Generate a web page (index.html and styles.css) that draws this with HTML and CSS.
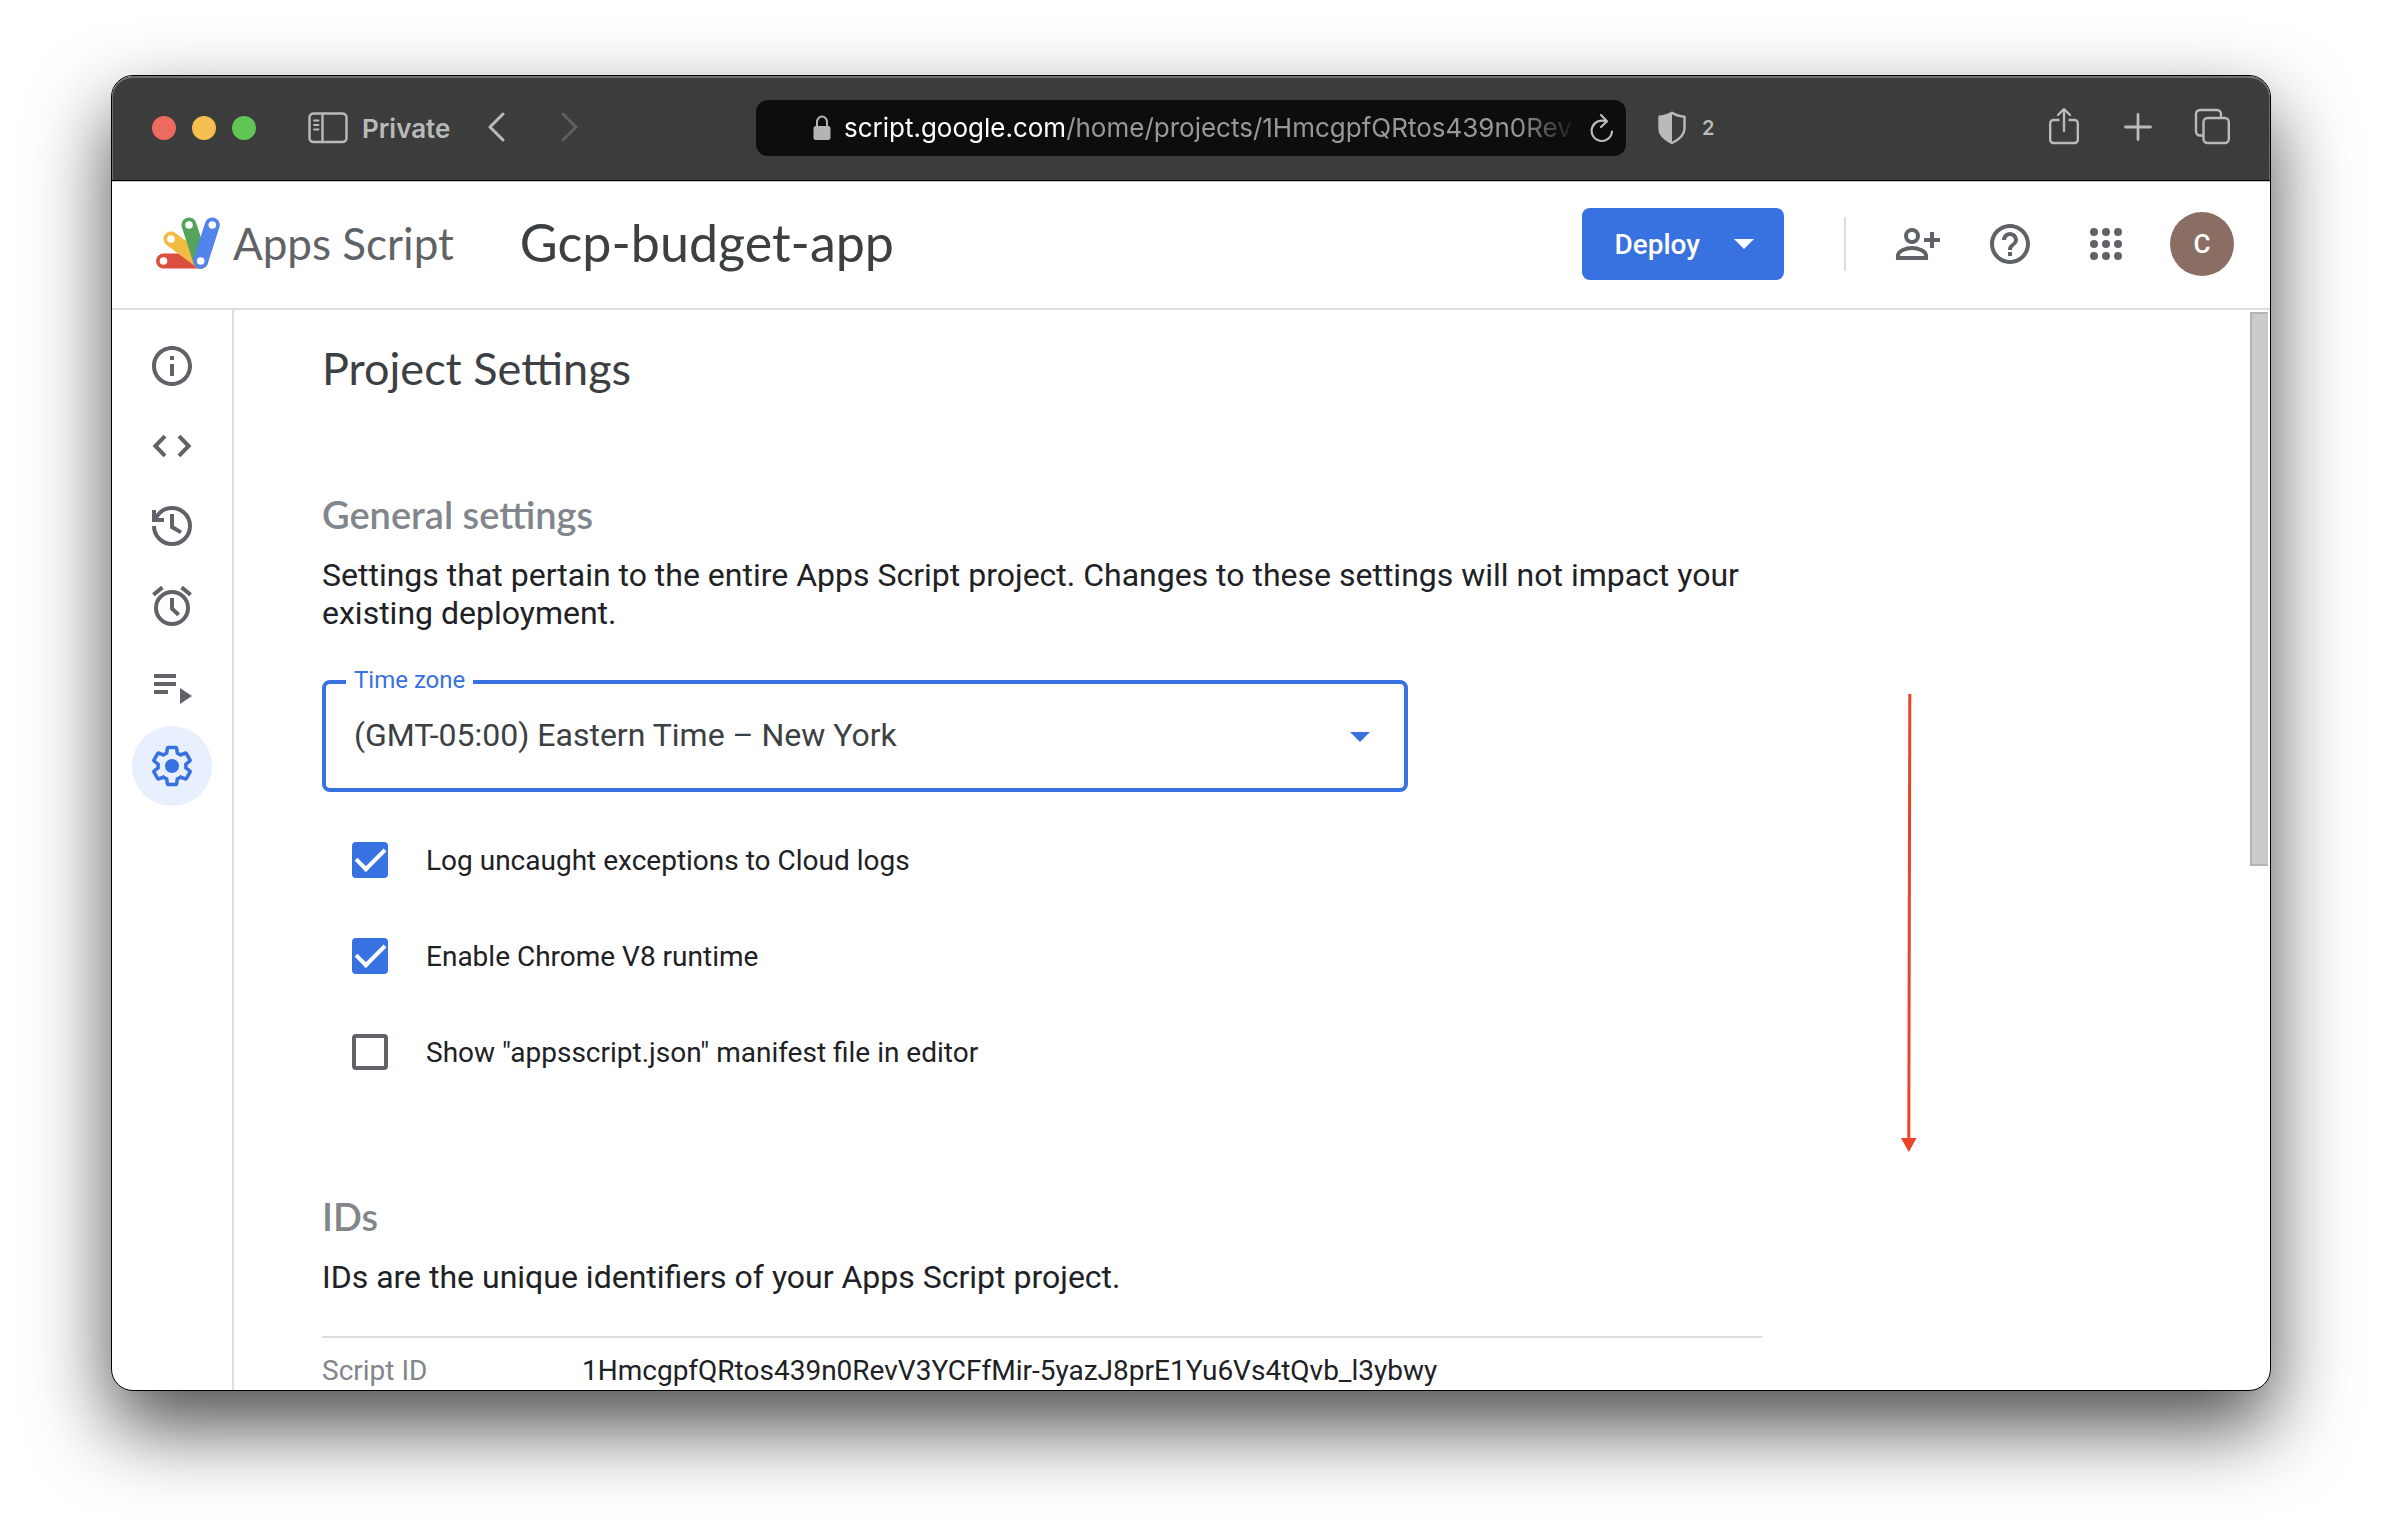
FILE: index.html
```html
<!DOCTYPE html>
<html lang="en">
<head>
<meta charset="utf-8">
<title>Gcp-budget-app - Project Settings - Apps Script</title>
<link rel="stylesheet" href="styles.css">
</head>
<body>
<div class="window">
  <div class="toolbar">
    <div class="toolbar-start">
      <div class="lights"><span class="light light-red"></span><span class="light light-yellow"></span><span class="light light-green"></span></div>
      <button class="tool private" type="button">
        <svg width="40" height="32" viewBox="0 0 40 32" fill="none" stroke="currentColor" stroke-width="2.4" stroke-linecap="round"><rect x="1.5" y="1.5" width="37" height="28.5" rx="4"/><path d="M14.500 2v28"/><path stroke-width="1.800" d="M6 8.500h4.500M6 13h4.500M6 17.500h4.500"/></svg>
        <span>Private</span>
      </button>
      <button class="tool back" type="button" aria-label="Back"><svg width="20" height="32" viewBox="0 0 20 32" fill="none" stroke="currentColor" stroke-width="3" stroke-linecap="round" stroke-linejoin="round"><path d="M17 2 4 15l13 13"/></svg></button>
      <button class="tool forward" type="button" aria-label="Forward" disabled><svg width="20" height="32" viewBox="0 0 20 32" fill="none" stroke="currentColor" stroke-width="3" stroke-linecap="round" stroke-linejoin="round"><path d="M3 2l13 13L3 28"/></svg></button>
    </div>
    <div class="address">
      <svg width="20" height="28" viewBox="0 0 20 28"><rect x="1.500" y="12" width="17" height="14" rx="2.500" fill="#b4b4b4"/><path d="M5 13V8a5 5.500 0 0 1 10 0v5" fill="none" stroke="#b4b4b4" stroke-width="2"/></svg>
      <button class="url" type="button"><span class="host">script.google.com</span>/home/projects/1HmcgpfQRtos439n0Rev</button>
      <button class="tool reload" type="button" aria-label="Reload"><svg width="24" height="30" viewBox="0 0 24 30" fill="none" stroke="currentColor" stroke-width="2.200" stroke-linecap="round" stroke-linejoin="round"><path d="M22 18.500A10.200 10.200 0 1 1 16.500 8.700"/><path d="M11 2l6 6.300-6 5.700"/></svg></button>
    </div>
    <div class="toolbar-end">
      <button class="tool shield" type="button" aria-label="Privacy report">
        <svg width="28" height="34" viewBox="0 0 28 34" fill="none" stroke="currentColor" stroke-width="2.400" stroke-linejoin="round"><path d="M14 1.800c3.500 2.500 7.500 3.400 12.500 4v12c0 6-5 10.500-12.500 14.200C6.500 28.300 1.500 23.800 1.500 17.800v-12c5-.6 9-1.500 12.500-4z"/><path fill="currentColor" stroke="none" d="M14 1.800v30.200C6.500 28.300 1.500 23.800 1.500 17.800v-12c5-.6 9-1.500 12.500-4z"/></svg>
        <span>2</span>
      </button>
      <div class="tools">
        <button class="tool" type="button" aria-label="Share"><svg width="36" height="40" viewBox="0 0 36 40" fill="none" stroke="currentColor" stroke-width="2.400" stroke-linecap="round" stroke-linejoin="round"><path d="M12.500 12H7.500a3.300 3.300 0 0 0-3.300 3.300v16.400A3.300 3.300 0 0 0 7.500 35h21a3.300 3.300 0 0 0 3.300-3.300V15.300a3.300 3.300 0 0 0-3.300-3.300h-5M18 23V1.300M12 7l6-6 6 6"/></svg></button>
        <button class="tool" type="button" aria-label="New tab"><svg width="36" height="40" viewBox="0 0 36 40" fill="none" stroke="currentColor" stroke-width="2.800" stroke-linecap="round"><path d="M18 6.500v25M5.500 19h25"/></svg></button>
        <button class="tool" type="button" aria-label="Tab overview"><svg width="36" height="40" viewBox="0 0 36 40" fill="none" stroke="currentColor" stroke-width="2.400" stroke-linejoin="round"><rect x="9.500" y="10" width="25.300" height="25" rx="4"/><path d="M9.500 27.500H6a4 4 0 0 1-4-4V6a4 4 0 0 1 4-4h17a4 4 0 0 1 4 4v4"/></svg></button>
      </div>
    </div>
  </div>

  <header class="header">
    <a class="brand" href="#">
      <svg width="64" height="52" viewBox="0 0 64 52" fill="none" stroke-width="15" stroke-linecap="round"><path stroke="#dc4f3f" d="M7.500 44h37"/><path stroke="#f2bc42" d="M15 22l29.700 22"/><path stroke="#56a45c" d="M33 8l11.700 36"/><path stroke="#5383ec" d="M56.300 8L44.700 44"/><g fill="#fff" stroke="none"><circle cx="7.500" cy="44" r="3.800"/><circle cx="15" cy="22" r="3.800"/><circle cx="33" cy="8" r="3.800"/><circle cx="56.300" cy="8" r="3.800"/><circle cx="44.700" cy="44" r="3.800"/></g></svg>
      <span>Apps Script</span>
    </a>
    <div class="project-name">Gcp-budget-app</div>
    <div class="actions">
      <button class="deploy" type="button"><span>Deploy</span><svg width="20" height="10" viewBox="0 0 20 10" fill="#fff"><path d="M0 0h20L10 10z"/></svg></button>
      <span class="divider"></span>
      <button class="icon" type="button" aria-label="Share project"><svg width="48" height="48" viewBox="0 0 24 24" fill="none" stroke="currentColor" stroke-width="2"><circle cx="9" cy="8" r="3"/><path d="M2 19v-1.200C2 15.400 6.200 14 9 14s7 1.400 7 3.800V19zM15 10h8M19 6v8"/></svg></button>
      <button class="icon" type="button" aria-label="Help"><svg width="48" height="48" viewBox="0 0 24 24" fill="currentColor"><path d="M11 18h2v-2h-2v2zm1-16C6.480 2 2 6.480 2 12s4.480 10 10 10 10-4.480 10-10S17.520 2 12 2zm0 18c-4.410 0-8-3.590-8-8s3.590-8 8-8 8 3.590 8 8-3.590 8-8 8zm0-14c-2.210 0-4 1.790-4 4h2c0-1.100.9-2 2-2s2 .9 2 2c0 2-3 1.750-3 5h2c0-2.250 3-2.500 3-5 0-2.210-1.790-4-4-4z"/></svg></button>
      <button class="icon" type="button" aria-label="Google apps"><svg width="48" height="48" viewBox="0 0 24 24" fill="currentColor"><circle cx="6" cy="6" r="2"/><circle cx="12" cy="6" r="2"/><circle cx="18" cy="6" r="2"/><circle cx="6" cy="12" r="2"/><circle cx="12" cy="12" r="2"/><circle cx="18" cy="12" r="2"/><circle cx="6" cy="18" r="2"/><circle cx="12" cy="18" r="2"/><circle cx="18" cy="18" r="2"/></svg></button>
      <button class="avatar" type="button">C</button>
    </div>
  </header>

  <div class="body">
    <nav class="rail">
      <a href="#" aria-label="Overview"><svg width="48" height="48" viewBox="0 0 24 24" fill="currentColor"><path d="M11 7h2v2h-2zm0 4h2v6h-2zm1-9C6.480 2 2 6.480 2 12s4.480 10 10 10 10-4.480 10-10S17.520 2 12 2zm0 18c-4.410 0-8-3.590-8-8s3.590-8 8-8 8 3.590 8 8-3.590 8-8 8z"/></svg></a>
      <a href="#" aria-label="Editor"><svg width="48" height="48" viewBox="0 0 24 24" fill="none" stroke="currentColor" stroke-width="2"><path d="M8.500 7.100L3.700 12l4.800 4.900M15.500 7.100l4.800 4.900-4.800 4.900"/></svg></a>
      <a href="#" aria-label="Project history"><svg width="48" height="48" viewBox="0 0 24 24" fill="none" stroke="currentColor" stroke-width="2"><path d="M3 12a9 9 0 1 0 9-9c-3.200 0-6 1.700-7.600 4.200L3.600 9M3 4v5h5M12 6v6.500l4.500 2.700"/></svg></a>
      <a href="#" aria-label="Triggers"><svg width="48" height="48" viewBox="0 0 24 24" fill="none" stroke="currentColor" stroke-width="2"><circle cx="12" cy="13" r="8"/><path d="M12 8v5.300l3.300 3.100M2.700 6.400L7.200 2.700M21.300 6.400l-4.500-3.700"/></svg></a>
      <a href="#" aria-label="Executions"><svg width="48" height="48" viewBox="0 0 24 24" fill="currentColor"><path d="M3 6h11v2H3zM3 10h11v2H3zM3 14h7v2H3zM16 13v8l6-4z"/></svg></a>
      <a href="#" class="active" aria-label="Project Settings" aria-current="page"><svg width="48" height="48" viewBox="0 0 24 24"><g transform="translate(12 12) scale(.93) translate(-12 -12)" fill="none" stroke="currentColor" stroke-width="1.900"><path d="M19.430 12.980c.04-.32.07-.64.07-.98 0-.34-.03-.66-.07-.98l2.110-1.650c.19-.15.24-.42.12-.64l-2-3.460c-.09-.16-.26-.25-.44-.25-.06 0-.12.01-.17.03l-2.490 1c-.52-.4-1.080-.73-1.690-.98l-.38-2.650C14.460 2.180 14.250 2 14 2h-4c-.25 0-.46.18-.49.42l-.38 2.650c-.61.25-1.170.59-1.690.98l-2.490-1c-.06-.02-.12-.03-.18-.03-.17 0-.34.09-.43.25l-2 3.460c-.13.22-.07.49.12.64l2.110 1.650c-.04.32-.07.65-.07.98 0 .33.03.66.07.98l-2.110 1.650c-.19.15-.24.42-.12.64l2 3.460c.09.16.26.25.44.25.06 0 .12-.01.17-.03l2.490-1c.52.4 1.080.73 1.690.98l.38 2.650c.03.24.24.42.49.42h4c.25 0 .46-.18.49-.42l.38-2.650c.61-.25 1.170-.59 1.690-.98l2.490 1c.06.02.12.03.18.03.17 0 .34-.09.43-.25l2-3.460c.12-.22.07-.49-.12-.64l-2.110-1.650z"/></g><circle cx="12" cy="12" r="3.500" fill="currentColor"/></svg></a>
    </nav>
    <main class="settings">
      <h1>Project Settings</h1>
      <section>
        <h2>General settings</h2>
        <p>Settings that pertain to the entire Apps Script project. Changes to these settings will not impact your existing deployment.</p>
        <div class="field">
          <label for="tz">Time zone</label>
          <select id="tz"><option>(GMT-05:00) Eastern Time – New York</option></select>
          <svg class="caret" width="20" height="10" viewBox="0 0 20 10"><path fill="currentColor" d="M0 0h20L10 10z"/></svg>
        </div>
        <div class="options">
          <label><input type="checkbox" checked><span>Log uncaught exceptions to Cloud logs</span></label>
          <label><input type="checkbox" checked><span>Enable Chrome V8 runtime</span></label>
          <label><input type="checkbox"><span>Show "appsscript.json" manifest file in editor</span></label>
        </div>
      </section>
      <section>
        <h2>IDs</h2>
        <p>IDs are the unique identifiers of your Apps Script project.</p>
        <table class="ids"><tbody><tr><th scope="row">Script ID</th><td>1HmcgpfQRtos439n0RevV3YCFfMir-5yazJ8prE1Yu6Vs4tQvb_l3ybwy</td></tr></tbody></table>
      </section>
    </main>
    <div class="scrollbar"><div class="thumb"></div></div>
    <svg class="arrow" width="16" height="458" viewBox="0 0 16 458"><path d="M8.800 0L7.800 446" stroke="#ea4326" stroke-width="3"/><path d="M0 444h15.500L7.800 458z" fill="#ea4326"/></svg>
  </div>
</div>
</body>
</html>
```
FILE: styles.css
```css
* { box-sizing: border-box; }

:root {
  --blue: #3871e0;
  --ink: #202124;
  --ink-soft: #3c4043;
  --icon: #5f6368;
  --muted: #80868b;
  --line: #dadce0;
  --chrome: #3b3c3b;
  --chrome-ink: #b9bbba;
}

body {
  margin: 0;
  height: 100vh;
  padding: 75px 111px 147px;
  display: flex;
  background: #fff;
  color: var(--ink);
  font-family: Roboto, sans-serif;
}

svg { display: block; flex: none; }

button {
  border: 0;
  padding: 0;
  background: none;
  color: inherit;
  font: inherit;
}

.window {
  flex: 1;
  min-width: 0;
  display: flex;
  flex-direction: column;
  overflow: hidden;
  border: 1px solid #000;
  border-radius: 22px;
  background: #fff;
  box-shadow: 0 36px 80px rgba(0, 0, 0, .7);
}

/* Browser toolbar */
.toolbar {
  flex: none;
  height: 105px;
  display: grid;
  grid-template-columns: 37fr 50fr 37fr;
  align-items: center;
  border-bottom: 1px solid #000;
  border-radius: 21px 21px 0 0;
  background: var(--chrome);
  box-shadow: inset 0 2px 0 #6f706f, inset 1px 0 0 #6f706f, inset -1px 0 0 #6f706f;
  color: var(--chrome-ink);
  font-family: Inter, sans-serif;
}

.toolbar-start,
.toolbar-end,
.lights,
.tool { display: flex; align-items: center; }

.toolbar-start { padding-left: 40px; }
.lights { gap: 16px; margin-right: 52px; }
.light { width: 24px; height: 24px; border-radius: 50%; }
.light-red { background: #ec6a5e; }
.light-yellow { background: #f4bf4f; }
.light-green { background: #61c554; }

.private {
  gap: 14px;
  margin-right: 36px;
  font-size: 26px;
  font-weight: 600;
}
.back { margin-right: 54px; }
.forward { color: #5f605f; }

.address {
  min-width: 0;
  height: 56px;
  display: flex;
  align-items: center;
  gap: 12px;
  padding: 0 12px 0 56px;
  border-radius: 12px;
  background: #0d0d0d;
  color: #98989a;
}
.url {
  flex: 1;
  min-width: 0;
  overflow: hidden;
  text-align: left;
  white-space: nowrap;
  font-size: 26px;
  line-height: 36px;
  -webkit-mask-image: linear-gradient(to right, #000 92%, transparent);
  mask-image: linear-gradient(to right, #000 92%, transparent);
}
.host { color: #fff; }
.reload { color: var(--chrome-ink); }

.toolbar-end { justify-content: space-between; padding: 0 40px 0 32px; }
.shield { gap: 16px; font-size: 20px; font-weight: 600; }
.tools { display: flex; gap: 38px; }

/* App header */
.header {
  flex: none;
  height: 129px;
  display: flex;
  align-items: center;
  padding: 0 36px 2px 44px;
  border-top: 1px solid #c8c8c8;
  border-bottom: 2px solid var(--line);
}
.brand {
  display: flex;
  align-items: center;
  gap: 13px;
  padding-bottom: 2px;
  color: var(--icon);
  font: 44px/56px Lato, sans-serif;
  text-decoration: none;
  white-space: nowrap;
}
.project-name {
  margin-left: 66px;
  padding-bottom: 4px;
  color: var(--ink-soft);
  font: 52px/64px Lato, sans-serif;
  white-space: nowrap;
}
.actions {
  margin-left: auto;
  display: flex;
  align-items: center;
  color: var(--icon);
}
.deploy {
  height: 72px;
  display: flex;
  align-items: center;
  gap: 34px;
  padding: 0 30px 0 32px;
  border-radius: 8px;
  background: var(--blue);
  color: #fff;
  font-size: 28px;
  font-weight: 500;
}
.divider { width: 2px; height: 54px; margin: 0 48px 0 60px; background: var(--line); }
.icon { margin-right: 48px; }
.divider + .icon { margin-right: 44px; }
.avatar {
  width: 64px;
  height: 64px;
  margin-left: -8px;
  border-radius: 50%;
  background: #8a6e63;
  color: #fff;
  font-size: 26px;
  font-weight: 500;
}

/* Page body */
.body {
  flex: 1;
  min-height: 0;
  display: flex;
  position: relative;
}
.rail {
  flex: none;
  width: 122px;
  padding: 16px 20px 0;
  border-right: 2px solid var(--line);
}
.rail a {
  display: grid;
  place-items: center;
  height: 80px;
  border-radius: 50%;
  color: var(--icon);
}
.rail .active { background: #e8f0fe; color: var(--blue); }

.settings {
  flex: 1;
  min-width: 0;
  overflow: hidden;
  padding: 30px 88px 0;
}
h1 {
  margin: 0 0 94px;
  color: var(--ink-soft);
  font: 45px/56px Lato, sans-serif;
}
h2 {
  margin: 0 0 18px;
  color: var(--muted);
  font: 600 38px/48px Lato, sans-serif;
}
section { max-width: 1440px; }
section + section { margin-top: 92px; }
p { margin: 0; font-size: 32px; line-height: 38px; }

.field {
  position: relative;
  max-width: 1086px;
  margin-top: 48px;
  color: var(--blue);
}
.field label {
  position: absolute;
  top: -16px;
  left: 24px;
  padding: 0 8px;
  background: #fff;
  font-size: 24px;
  line-height: 32px;
}
.field select {
  display: block;
  width: 100%;
  height: 112px;
  padding: 0 56px 2px 28px;
  border: 4px solid var(--blue);
  border-radius: 8px;
  outline: 0;
  appearance: none;
  background: #fff;
  color: var(--ink-soft);
  font: 32px/38px Roboto, sans-serif;
}
.caret { position: absolute; top: 52px; right: 38px; pointer-events: none; }

.options { margin-top: 20px; padding-left: 30px; }
.options label {
  display: flex;
  align-items: center;
  gap: 38px;
  height: 96px;
  font-size: 28px;
  line-height: 34px;
}
.options span { padding-top: 2px; }
.options input {
  width: 36px;
  height: 36px;
  margin: 0;
  display: grid;
  place-items: center;
  appearance: none;
  border: 4px solid var(--icon);
  border-radius: 4px;
}
.options input:checked { border-color: var(--blue); background: var(--blue); }
.options input:checked::before {
  content: "";
  width: 25px;
  height: 12px;
  margin-top: -8px;
  border: solid #fff;
  border-width: 0 0 4px 4px;
  transform: rotate(-45deg);
}

.ids {
  width: 100%;
  margin-top: 40px;
  border-collapse: collapse;
  border-top: 2px solid var(--line);
  font-size: 28px;
  line-height: 34px;
}
.ids th,
.ids td { padding: 16px 0; text-align: left; font-weight: 400; }
.ids th { width: 260px; color: var(--muted); }

.scrollbar { flex: none; width: 20px; padding: 2px 2px 0 0; }
.thumb {
  height: 51.4%;
  border: 2px solid #b4b4b4;
  border-right: 0;
  background: #cbcbcb;
}

.arrow { position: absolute; top: 384px; right: 353px; }
```
